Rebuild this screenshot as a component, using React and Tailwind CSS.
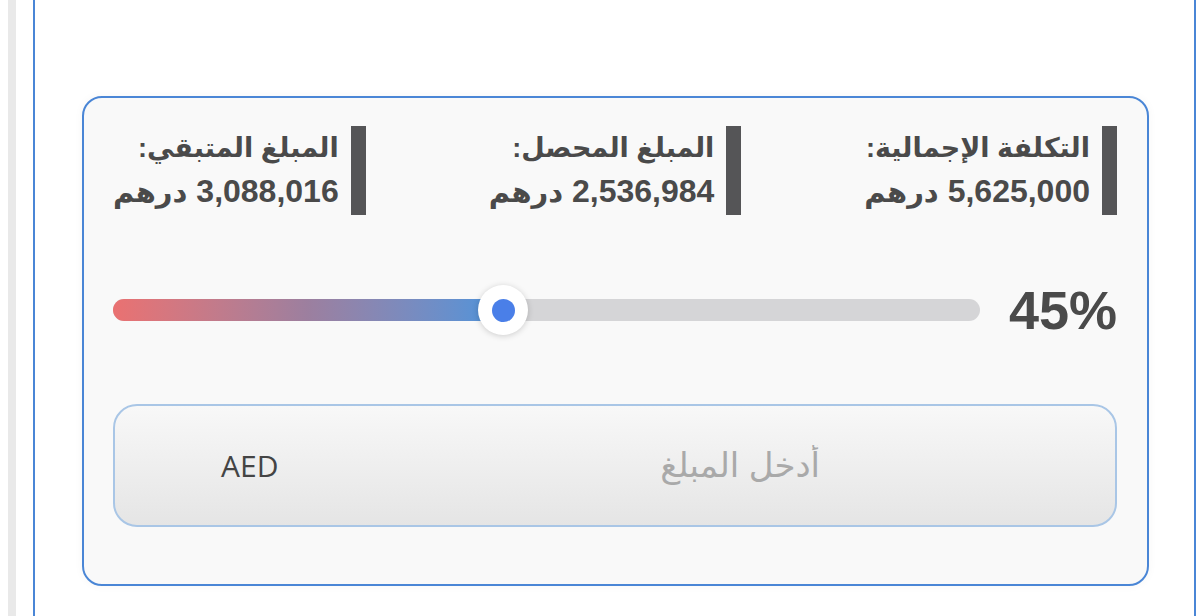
import React from "react"

const stats = [
  { label: "التكلفة الإجمالية:", value: "5,625,000" },
  { label: "المبلغ المحصل:", value: "2,536,984" },
  { label: "المبلغ المتبقي:", value: "3,088,016" },
]

function Stat({ label, value }) {
  return (
    <div className="flex items-stretch gap-3">
      <div className="w-[15px] bg-[#555557]" />
      <div className="flex flex-col justify-center text-right text-[#4a4a4a] font-bold">
        <span className="text-[27px] leading-[42px]">{label}</span>
        <span className="text-[32px] leading-[44px]">
          {value} <span className="text-[29px]">درهم</span>
        </span>
      </div>
    </div>
  )
}

function Slider({ percent }) {
  return (
    <div className="flex items-center gap-[29px] h-14" dir="rtl">
      <span className="text-[54px] font-bold text-[#4a4a4a] leading-none" dir="ltr">
        {percent}%
      </span>
      <div className="relative flex-1 h-[22px] rounded-full bg-[#d5d5d7]" dir="ltr">
        <div
          className="h-full rounded-full bg-gradient-to-r from-[#ea7171] via-[#9c7f9f] to-[#4a94dc]"
          style={{ width: `${percent}%` }}
        />
        <div
          className="absolute top-1/2 -translate-x-1/2 -translate-y-1/2 w-[50px] h-[50px] rounded-full bg-white shadow-[0_1px_6px_rgba(0,0,0,0.18)] flex items-center justify-center"
          style={{ left: `${percent}%` }}
        >
          <div className="w-[23px] h-[23px] rounded-full bg-[#4a7fe8]" />
        </div>
      </div>
    </div>
  )
}

export default function App() {
  return (
    <div
      className="flex min-h-screen bg-white"
      style={{ fontFamily: '"Liberation Sans", "DejaVu Sans", sans-serif' }}
    >
      <div className="ml-2 w-2 bg-[#e9e9e9]" />
      <div className="ml-[17px] mr-[3px] flex-1 border-x-2 border-[#4a86d6] pt-[96px] pl-[47px] pr-[45px] pb-10">
        <div className="rounded-[20px] border-2 border-[#4a86d6] bg-[#f9f9f9] shadow-[0_0_10px_rgba(0,0,0,0.04)] pl-[29px] pr-[30px] pt-[28px] pb-[57px]">
          <div className="flex justify-between h-[89px]" dir="rtl">
            {stats.map((s) => (
              <Stat key={s.label} {...s} />
            ))}
          </div>

          <div className="mt-[67px]">
            <Slider percent={45} />
          </div>

          <div
            className="mt-[66px] flex items-center h-[123px] rounded-[24px] border-2 border-[#a9c6e6] bg-gradient-to-b from-[#f8f8f8] to-[#e5e5e5]"
            dir="rtl"
          >
            <input
              className="flex-1 min-w-0 bg-transparent outline-none pr-[295px] text-[34px] text-[#444] placeholder:text-[#a9a9a9]"
              placeholder="أدخل المبلغ"
            />
            <span
              className="pl-[106px] text-[30px] text-[#444]"
              style={{ fontFamily: '"Open Sans", sans-serif' }}
            >
              AED
            </span>
          </div>
        </div>
      </div>
    </div>
  )
}
